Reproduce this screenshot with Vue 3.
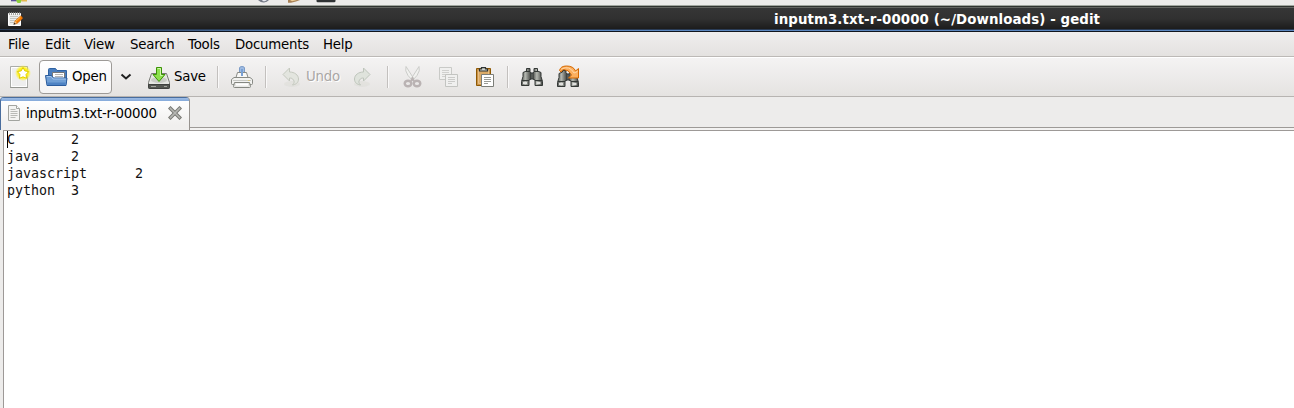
<script setup>
const menus = [
  { label: 'File', width: 37 },
  { label: 'Edit', width: 39 },
  { label: 'View', width: 46 },
  { label: 'Search', width: 58 },
  { label: 'Tools', width: 47 },
  { label: 'Documents', width: 88 },
  { label: 'Help', width: 40 },
]
const content = 'C\t2\njava\t2\njavascript\t2\npython\t3'
</script>

<template>
  <div class="window">
    <div class="panel">
      <svg width="360" height="5" viewBox="0 0 360 5">
        <path d="M11 0h6v1.300h-6z" fill="#5a5297" />
        <path d="M16 0h6l-1.500 3h-3z" fill="#8fd03c" />
        <path d="M21 0h6v1.500h-5z" fill="#e5b94d" />
        <path d="M258 0q3 2.700 6 2.500t5-2.500z" fill="#747985" />
        <path d="M262 0h5l-2 1.300h-2z" fill="#e8eaf0" />
        <path d="M288 0h12l-4 1.500-5 1.200h-3z" fill="#a98255" />
        <path d="M290 0h7l-5 1.300z" fill="#efd09a" />
        <path d="M316.500 0h19v1q0 1.300-1.300 1.300h-16.400q-1.300 0-1.300-1.300z" fill="#303334" />
      </svg>
    </div>

    <header class="titlebar">
      <svg class="app-icon" width="16" height="16" viewBox="0 0 16 16">
        <path d="M1.500 2.500h12v12h-12z" fill="#eeeeec" stroke="#fff" />
        <path d="M2.500 1v3M4.500 1v3M6.500 1v3M8.500 1v3M10.500 1v3M12.500 1v3" stroke="#8b8d88" stroke-width=".8" />
        <path d="M3 5.500h8M3 7.500h8M3 9.500h5M3 11.500h4" stroke="#c5c7c2" />
        <path d="M7 13l1-3 5.500-5q2 .3 2 2.500L10 12.500z" fill="#f57900" stroke="#c25a00" stroke-width=".6" />
        <path d="M8.700 10.500L13.500 6" stroke="#fcca55" />
        <path d="M7 13l1-2.700 1.800 1.800z" fill="#edd2a0" />
        <path d="M6.300 13.700l1-2 1.500 1.300z" fill="#222" />
      </svg>
      <h1>inputm3.txt-r-00000 (~/Downloads) - gedit</h1>
    </header>

    <nav class="menubar">
      <span v-for="m in menus" :key="m.label" :style="{ width: m.width + 'px' }">{{ m.label }}</span>
    </nav>

    <div class="toolbar">
      <svg class="new" width="24" height="24" viewBox="0 0 24 24">
        <defs>
          <radialGradient id="glow"><stop offset=".6" stop-color="#fff21a" /><stop offset="1" stop-color="#fff21a" stop-opacity="0" /></radialGradient>
        </defs>
        <path d="M2.500 1.500h17v21h-17z" fill="#eee" stroke="#aaaca8" />
        <path d="M3.500 2.500h15v19h-15z" fill="none" stroke="#fff" />
        <path d="M2 22.500h18" stroke="#888a85" opacity=".6" />
        <circle cx="15" cy="8" r="8" fill="url(#glow)" />
        <path d="M15 2.500l1.800 3.400 3.900.7-2.700 2.800.5 3.900-3.500-1.600-3.500 1.600.5-3.900-2.700-2.800 3.900-.7z" fill="#fff" stroke="#e0cc00" />
        <path d="M15 4.500l1.200 2.500 2.800.5-2 2 .4 2.500-2.400-1-2.400 1 .4-2.500-2-2 2.800-.5z" fill="#fff" />
      </svg>

      <button class="open">
        <svg width="24" height="24" viewBox="0 0 24 24">
          <path d="M3.500 18V4.500q0-1 1-1h6l1.500 2h9.500V18z" fill="#4a7dbd" stroke="#2f62a3" />
          <path d="M7.500 7.500h12v9h-12z" fill="#fff" stroke="#777" />
          <path d="M10 9.500h8M10 11.500h8" stroke="#b5b5b5" />
          <path d="M.5 10.500h6l2 2.500h13.500l-1 7.500H2z" fill="#709fd5" stroke="#2b5c9d" />
          <path d="M1.700 11.500h4.300l2 2.500h12.800" fill="none" stroke="#a5c6ec" />
          <path d="M2.200 17.500h18.400l-.5 2.500H2.700z" fill="#4e83c4" />
        </svg>
        <span>Open</span>
      </button>

      <svg class="arrow" width="12" height="8" viewBox="0 0 12 8">
        <path d="M1.500 1.500L6 5.500l4.500-4" fill="none" stroke="#202020" stroke-width="2" />
      </svg>

      <svg class="save" width="24" height="24" viewBox="0 0 24 24">
        <path d="M4.500 7.500h15l3 9v5q0 1-1 1h-19q-1 0-1-1v-5z" fill="#e5e6e2" stroke="#777973" />
        <path d="M1.500 18.500h21v3q0 1-1 1h-19q-1 0-1-1z" fill="#555753" stroke="#3f413e" />
        <path d="M4 20.500h5M17 20.500h3" stroke="#a5a7a0" />
        <ellipse cx="12" cy="14" rx="8" ry="3" fill="#c9cbc5" />
        <path d="M9.500 1.500h5v7h3.500L12 15.500 6 8.500h3.500z" fill="#8de04d" stroke="#3c9306" />
        <path d="M10.500 2.500h3v7h2.200" fill="none" stroke="#cff6ae" />
      </svg>
      <span class="save-label">Save</span>
      <i class="sep s1"></i>

      <svg class="print" width="24" height="24" viewBox="0 0 24 24">
        <path d="M9.500 10V3q0-1.500 2.500-1.500T14.500 3v7z" fill="#9ebbe2" stroke="#7c9cc8" />
        <path d="M7.500 7.500h9l1.500 5H6z" fill="#f8f8f7" stroke="#888a85" />
        <path d="M12 4v7" stroke="#79a0d4" stroke-width="2" />
        <path d="M4 12.500h16l2.500 2v4q0 1-1 1h-19q-1 0-1-1v-4z" fill="#f2f2f0" stroke="#888a85" />
        <path d="M3 15.500h18" stroke="#c8c9c5" />
        <path d="M4.500 17.500h15l1 4q0 1-1 1h-15q-1 0-1-1z" fill="#e7e7e4" stroke="#858781" />
        <path d="M6 19.500h12" stroke="#fff" stroke-width="2" />
        <path d="M18 15.500h2" stroke="#d9c87a" />
      </svg>
      <i class="sep s2"></i>

      <svg class="undo" width="20" height="22" viewBox="0 0 20 22">
        <ellipse cx="10" cy="18" rx="8" ry="3" fill="#deded9" opacity=".6" />
        <path d="M1 8.500l6.500-6.500v4c5 0 9 3 9 7s-3 5.500-6 6c2-2 2-3.500 1-5s-2-2-4-2v3z" fill="#e3e5df" stroke="#c5c9bf" />
      </svg>
      <span class="undo-label">Undo</span>
      <svg class="redo" width="20" height="22" viewBox="0 0 20 22">
        <ellipse cx="9" cy="18" rx="8" ry="3" fill="#deded9" opacity=".6" />
        <path d="M17 8.500l-6.500-6.500v4c-5 0-9 3-9 7s3 5.500 6 6c-2-2-2-3.500-1-5s2-2 4-2v3z" fill="#dfe3dc" stroke="#bec5bb" />
      </svg>
      <i class="sep s3"></i>

      <svg class="cut" width="20" height="24" viewBox="0 0 20 24">
        <path d="M3 1.500q-1.500 4 2 9l4.500 5 1.500-1.500zM16 1.500q1.500 4-2 9l-4.500 5-1.500-1.500z" fill="#f1f1ef" stroke="#cbccc9" />
        <g fill="none" stroke="#bab3b3" stroke-width="2.400"><ellipse cx="5" cy="18.500" rx="3.300" ry="2.800" /><ellipse cx="14" cy="18.500" rx="3.300" ry="2.800" /></g>
        <path d="M8 16l1.500-2.500L11 16" fill="none" stroke="#bab3b3" stroke-width="2" />
      </svg>

      <svg class="copy" width="20" height="22" viewBox="0 0 20 22">
        <path d="M1.500.5h12v12h-12z" fill="#f0f0ef" stroke="#c9cac7" />
        <path d="M4 3.500h7M4 5.500h7M4 7.500h6M4 9.500h4" stroke="#d0d0ce" />
        <path d="M7.500 7.500h12v12h-12z" fill="#f0f0ef" stroke="#c3c4c1" />
        <path d="M10 10.500h7M10 12.500h7M10 14.500h7M10 16.500h4" stroke="#cbcbc9" />
      </svg>

      <svg class="paste" width="20" height="22" viewBox="0 0 20 22">
        <path d="M1.500 1.500h14v17h-14z" fill="#c89249" stroke="#8f5902" />
        <path d="M3.500 3.500h10v13h-10z" fill="#dbaa67" stroke="#f0cf9b" stroke-width=".7" />
        <path d="M4.500 4V2h2V.600h4V2h2v2z" fill="#d3d7cf" stroke="#2e3436" stroke-width="1.200" />
        <path d="M6.500 7.500h12v12h-12z" fill="#fff" stroke="#7c7e79" />
        <path d="M9 10.500h7M9 12.500h7M9 14.500h7M9 16.500h4" stroke="#999b96" />
      </svg>
      <i class="sep s4"></i>

      <svg class="find" width="24" height="20" viewBox="0 0 24 20">
        <defs>
          <linearGradient id="barrel"><stop stop-color="#50524f" /><stop offset=".4" stop-color="#b5b8b1" /><stop offset="1" stop-color="#3f413e" /></linearGradient>
        </defs>
        <path d="M9 5h6v6H9z" fill="#777a76" stroke="#2e3436" />
        <path d="M6.500.500h3.500v3l1 1.500v6l-2 1v5.500h-7.500v-4l1.500-5V4.500l3.500-1.500z" fill="url(#barrel)" stroke="#343836" />
        <path d="M17.500.500h-3.500v3l-1 1.500v6l2 1v5.500h7.500v-4l-1.500-5V4.500l-3.500-1.500z" fill="url(#barrel)" stroke="#343836" />
        <path d="M2 12.500h7M15 12.500h7M6 3.500h4M14 3.500h4" stroke="#343836" />
        <path d="M3 15h4M16.500 15h4" stroke="#e0e0de" stroke-width="2" />
      </svg>

      <svg class="replace" width="24" height="24" viewBox="0 0 24 24">
        <path d="M9 9h6v6H9z" fill="#777a76" stroke="#2e3436" />
        <path d="M6.500 5.500h3.500v2l1 1.500v6l-2 1v5.500h-7.500v-4l1.500-5V8.500l3.500-1.500z" fill="url(#barrel)" stroke="#343836" />
        <path d="M17.500 5.500h-3.500v2l-1 1.500v6l2 1v5.500h7.500v-4l-1.500-5V8.500l-3.500-1.500z" fill="url(#barrel)" stroke="#343836" />
        <path d="M2 16.500h7M15 16.500h7" stroke="#343836" />
        <path d="M3 19h4M16.500 19h4" stroke="#e0e0de" stroke-width="2" />
        <path d="M3.500 5.500q1-4.500 7-4.500 7 0 9 5l3-2.500v9.500H12.500l3-3Q12.500 4.500 8 4.500q-2 0-3 2.500z" fill="#fcaf5e" stroke="#d56800" />
        <path d="M5.500 4q8-4 12.500 4l3.500-1.500" fill="none" stroke="#ffd7a8" />
      </svg>
    </div>

    <div class="tabs">
      <div class="tab">
        <svg class="doc" width="14" height="16" viewBox="0 0 14 16">
          <path d="M1.500.5h8l3 3v12h-11z" fill="#f4f4f2" stroke="#a2a49f" />
          <path d="M9.500.5v3h3" fill="#fff" stroke="#a2a49f" />
          <path d="M3.500 4.500h5M3.500 6.500h7M3.500 8.500h7M3.500 10.500h7M3.500 12.500h5" stroke="#b9bab6" />
        </svg>
        <span>inputm3.txt-r-00000</span>
        <svg class="close" width="14" height="14" viewBox="0 0 14 14">
          <path d="M2.500 2.500l9 9M11.500 2.500l-9 9" stroke="#777873" stroke-width="3.600" stroke-linecap="square" />
          <path d="M2.500 2.500l9 9M11.500 2.500l-9 9" stroke="#b5b6b2" stroke-width="1.600" stroke-linecap="square" />
        </svg>
      </div>
    </div>

    <main class="editor">
      <pre>{{ content }}</pre>
      <i class="caret"></i>
    </main>
  </div>
</template>

<style>
body { margin: 0; overflow: hidden; }
</style>

<style scoped>
* { box-sizing: border-box; }
.window { width: 1294px; height: 408px; display: flex; flex-direction: column; overflow: hidden; background: #edeceb; color: #000; font: 13.333px/16px "DejaVu Sans", sans-serif; letter-spacing: -.22px; }
svg { display: block; flex: none; }
.panel { height: 5px; flex: none; background: #ecebe9; }
.titlebar { height: 27px; flex: none; display: flex; align-items: flex-start; background: linear-gradient(90deg, #10151f, #10151f00 300px) 0 25px / 100% 1px no-repeat, linear-gradient(#a1a69e 0 1px, #30332f 1px 2px, #62645f 2px 3px, #363636 3px, #303030 14px, #1c1c1c 24px, #2a3c56 24px 25px, #5b87c0 25px 26px, #10151f 26px); }
.app-icon { margin: 6px 0 0 7px; }
h1 { margin: 7px 0 0 751px; font: bold 13.333px/16px "DejaVu Sans", sans-serif; letter-spacing: .1px; color: #fff; white-space: nowrap; }
.menubar { height: 24px; flex: none; display: flex; padding: 5px 0 0 8px; background: linear-gradient(#efeeee, #e4e2e0); }
.menubar span { flex: none; }
.toolbar { height: 41px; flex: none; display: flex; align-items: flex-start; border-top: 1px solid #bcb9b6; border-bottom: 1px solid #b7b4b1; background: linear-gradient(#fff 0 1px, #f4f3f3 1px, #e5e3e1); }
.new { margin: 8px 0 0 8px; }
.open { width: 73px; height: 34px; margin: 3px 0 0 7px; padding: 0 0 0 5px; display: flex; align-items: center; border: 1px solid #9d9a97; border-radius: 4px; background: linear-gradient(#fff, #f5f4f4); font: inherit; letter-spacing: -.22px; color: #000; }
.open span { margin-left: 3px; }
.arrow { margin: 16px 0 0 8px; }
.save { margin: 9px 0 0 15px; }
.save-label { width: 33px; margin: 12px 0 0 3px; }
.sep { width: 2px; height: 22px; flex: none; margin-top: 9px; background: linear-gradient(90deg, #c3c0be 50%, #faf9f9 50%); }
.s1 { margin-left: 10px; }
.print { margin: 8px 0 0 11px; }
.s2 { margin-left: 11px; }
.undo { margin: 9px 0 0 15px; }
.undo-label { width: 35px; margin: 12px 0 0 4px; color: #aaa7a5; text-shadow: 1px 1px #fff; }
.redo { margin: 9px 0 0 12px; }
.s3 { margin-left: 14px; }
.cut { margin: 8px 0 0 14px; }
.copy { margin: 10px 0 0 15px; }
.paste { margin: 10px 0 0 17px; }
.s4 { margin-left: 12px; }
.find { margin: 11px 0 0 11px; }
.replace { margin: 8px 0 0 12px; }
.tabs { height: 33px; flex: none; background: linear-gradient(#edeceb 0 30px, #9d9a97 30px 31px, #f3f2f1 31px); }
.tab { width: 190px; height: 33px; display: flex; align-items: flex-start; border-left: 1px solid #496d9d; border-right: 1px solid #97938f; border-radius: 4px 4px 0 0; background: linear-gradient(#496d9d 0 1px, #9dbce5 1px, #85aada 4px, #fff 4px, #f0efee 28px); }
.doc { margin: 8px 0 0 6px; }
.tab span { width: 131px; margin: 9px 0 0 5px; white-space: nowrap; }
.close { margin: 9px 0 0 11px; }
.editor { position: relative; flex: 1; margin-left: 3px; padding: 0 0 0 3px; border-top: 1px solid #9d9997; border-left: 1px solid #9d9997; background: #fff; }
pre { margin: 0; font: 13.333px/17px "DejaVu Sans Mono", monospace; tab-size: 64px; letter-spacing: -.027px; color: #111; }
.caret { position: absolute; left: 3px; top: 0; width: 1px; height: 17px; background: #000; }
</style>
